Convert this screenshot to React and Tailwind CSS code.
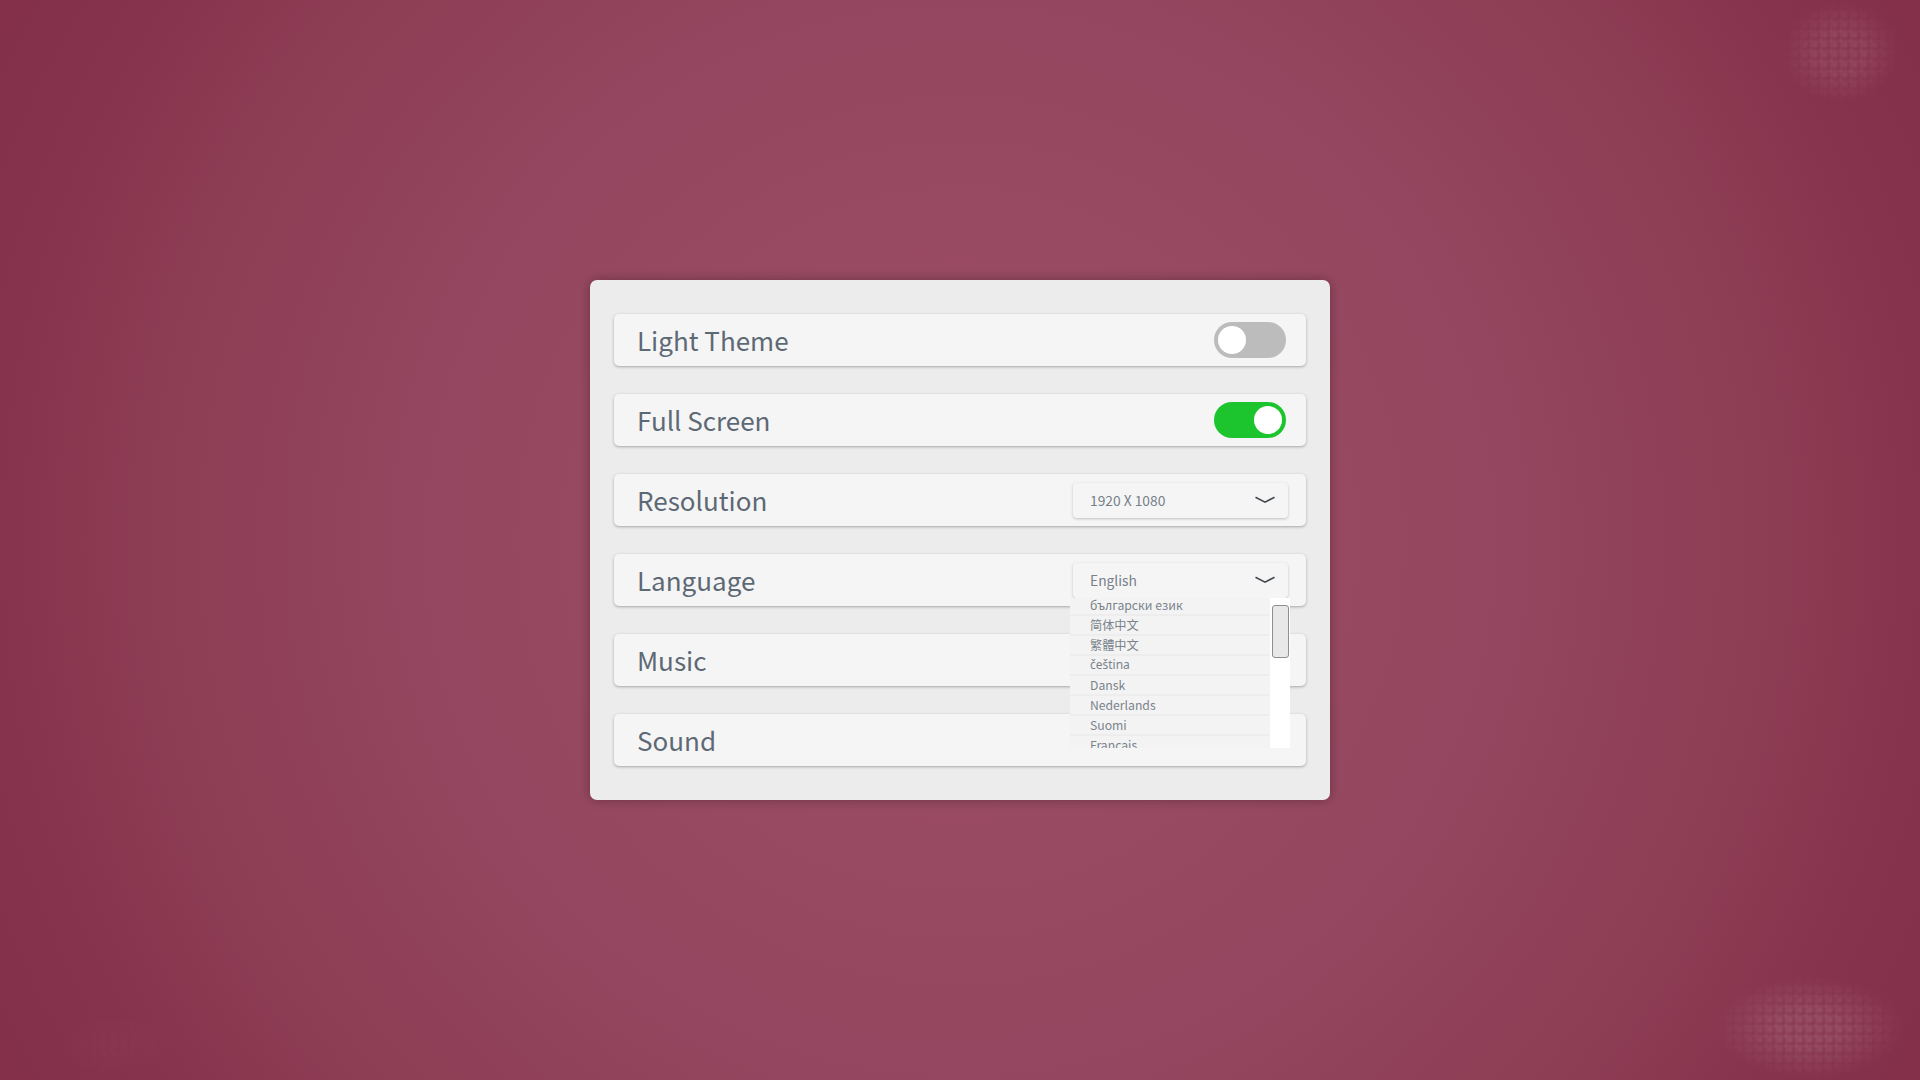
const fontStack = "font-['Noto_Sans_CJK_SC','Noto_Sans',sans-serif]";

const languages = ["български език", "简体中文", "繁體中文", "čeština", "Dansk", "Nederlands", "Suomi", "Français", "Deutsch"];

const Toggle = ({ on }) => (
  <div className={`flex h-9 w-[72px] items-center rounded-full px-1 ${on ? "justify-end bg-[#1cc42e]" : "justify-start bg-[#bcbcbc]"}`}>
    <div className="h-7 w-7 rounded-full bg-white" />
  </div>
);

const Select = ({ value }) => (
  <div className="-mr-0.5 flex h-[35px] w-[215px] items-center justify-between rounded-[4px] bg-[#f5f5f5] pr-[13px] pl-[17px] text-[13.8px] text-[#76808a] shadow-[0_1px_3px_rgba(0,0,0,0.22)]">
    <span>{value}</span>
    <svg width="20" height="8" viewBox="0 0 20 8" fill="none" stroke="#43484e" strokeWidth="1.6">
      <path d="M0.5 1.2 L10 6.2 L19.5 1.2" />
    </svg>
  </div>
);

const Row = ({ label, children }) => (
  <div className="flex h-[52px] items-center justify-between rounded-[5px] bg-[#f5f5f5] pr-5 pl-[23px] shadow-[0_1px_3px_rgba(0,0,0,0.3)]">
    <span className="text-[26px] leading-none text-[#5d6975]">{label}</span>
    {children}
  </div>
);

const Dots = ({ className }) => (
  <div className={`pointer-events-none absolute bg-[radial-gradient(circle,rgba(255,255,255,0.3)_0,rgba(255,255,255,0.1)_3px,transparent_5px),linear-gradient(to_right,rgba(255,255,255,0.16)_2px,transparent_2px),linear-gradient(to_bottom,rgba(255,255,255,0.16)_2px,transparent_2px)] bg-size-[10px_10px] blur-[1px] ${className}`} />
);

export default function App() {
  return (
    <div className={`relative flex h-screen w-full items-center justify-center overflow-hidden bg-[radial-gradient(circle_at_center,#9c4d65_0%,#984a62_30%,#944660_49%,#8d3e55_72%,#86334d_88%,#84304b_100%)] ${fontStack}`}>
      <Dots className="top-0 right-[20px] h-[105px] w-[120px] opacity-50 [mask-image:radial-gradient(closest-side,black_40%,transparent)]" />
      <Dots className="right-[15px] bottom-0 h-[105px] w-[190px] opacity-70 [mask-image:radial-gradient(closest-side,black_30%,transparent)]" />
      <Dots className="bottom-0 left-[50px] h-[70px] w-[130px] opacity-15 [mask-image:radial-gradient(closest-side,black,transparent)]" />

      <div className="flex h-[520px] w-[740px] flex-col gap-7 rounded-[7px] bg-[#ececec] px-6 py-[34px] shadow-[0_0_12px_rgba(0,0,0,0.3)]">
        <Row label="Light Theme"><Toggle on={false} /></Row>
        <Row label="Full Screen"><Toggle on /></Row>
        <Row label="Resolution"><Select value="1920 X 1080" /></Row>
        <div className="relative z-10">
          <Row label="Language"><Select value="English" /></Row>
          <div className="absolute top-[44px] left-[456px] flex h-[150px] w-[220px] overflow-hidden bg-white">
            <div className="w-[200px] overflow-hidden bg-[#f3f3f3]">
              <div className="-mt-[2px]">
                {languages.map((lang) => (
                  <div
                    key={lang}
                    className={`flex h-5 items-center border-b-2 border-[#ededed] pl-5 text-[#7a838c] ${lang === "čeština" ? "font-['Noto_Sans'] text-[12px]" : "text-[12.2px]"}`}
                  >
                    {lang}
                  </div>
                ))}
              </div>
            </div>
            <div className="w-5 bg-white pt-[7px] pl-[2px]">
              <div className="h-[53px] w-[17px] rounded-[3px] border border-[#8a8f94] bg-[#e8e8e8]" />
            </div>
          </div>
        </div>
        <Row label="Music" />
        <Row label="Sound" />
      </div>
    </div>
  );
}
